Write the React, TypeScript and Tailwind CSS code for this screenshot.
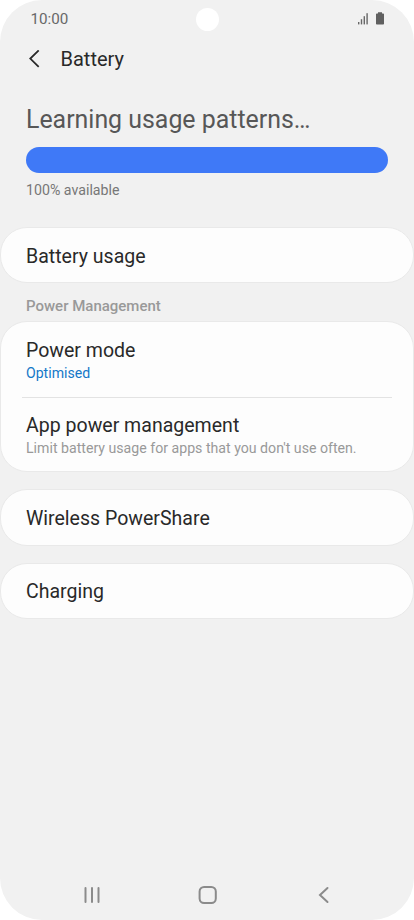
import type { ReactNode } from 'react';

function Card({ children, className }: { children: ReactNode; className: string }) {
  return (
    <section className={`border border-[#e9e9e9] bg-[#fdfdfd] rounded-[27px] ${className}`}>
      {children}
    </section>
  );
}

function RowTitle({ children }: { children: ReactNode }) {
  return <h2 className="text-[19.55px] leading-6 text-[#292929]">{children}</h2>;
}

export default function App() {
  return (
    <div className="w-[414px] h-[920px] bg-white font-['Roboto',sans-serif]">
      <div className="w-full h-full flex flex-col bg-[#f1f1f1] rounded-[42px] overflow-hidden">
        {/* Status bar */}
        <div className="h-[38px] shrink-0 grid grid-cols-3 items-center px-[30px]">
          <span className="pl-[0.4px] text-[15.2px] leading-5 text-[#686868]">10:00</span>
          <div className="w-[23px] h-[23px] rounded-full bg-white justify-self-center" />
          <div className="flex items-center justify-end gap-2 pb-[2px]">
            <svg width="10" height="13" viewBox="0 0 10 13" fill="#686868">
              <rect x="0" y="10" width="1.4" height="2.4" />
              <rect x="2.8" y="7.2" width="1.4" height="5.2" />
              <rect x="5.600" y="4.200" width="1.4" height="8.2" />
              <rect x="8.400" y="1.2" width="1.4" height="11.2" />
            </svg>
            <svg width="8" height="13" viewBox="0 0 8 13" fill="#606060">
              <path d="M2 .3h4v1.2h1.2a.8.8 0 0 1 .8.8v9.5a.8.8 0 0 1-.8.8H.8a.8.8 0 0 1-.8-.8V2.3a.8.8 0 0 1 .8-.8H2z" />
            </svg>
          </div>
        </div>

        {/* Header */}
        <header className="h-[42px] shrink-0 flex items-center pl-[29px]">
          <svg width="11" height="18" viewBox="0 0 11 18" fill="none" stroke="#292929" strokeWidth="1.8">
            <path d="M9.7.4 1.3 8.6l8.4 8.2" />
          </svg>
          <h1 className="ml-[20.5px] text-[20px] leading-6 text-[#292929]">Battery</h1>
        </header>

        {/* Charge level */}
        <div className="h-[147px] shrink-0 px-[26px] pt-[24px]">
          <p className="text-[24.9px] leading-8 text-[#575757]">Learning usage patterns…</p>
          <div className="mt-[11px] h-[26px] rounded-full bg-[#3f79f7]" />
          <p className="mt-[7px] text-[14.2px] leading-5 text-[#777777]">100% available</p>
        </div>

        <Card className="h-[56px] shrink-0 flex items-center px-[25px] pt-[3px]">
          <RowTitle>Battery usage</RowTitle>
        </Card>

        <p className="h-[38px] shrink-0 pt-[13px] px-[26px] text-[15px] leading-5 font-medium text-[#999999]">
          Power Management
        </p>

        <Card className="h-[151px] shrink-0 px-[21px]">
          <div className="h-[75px] px-1 pt-[17px]">
            <RowTitle>Power mode</RowTitle>
            <p className="text-[14.1px] leading-5 text-[#1478c8]">Optimised</p>
          </div>
          <div className="h-[75px] px-1 pt-4 border-t border-[#e3e3e3]">
            <RowTitle>App power management</RowTitle>
            <p className="text-[14.15px] leading-5 text-[#999999]">
              Limit battery usage for apps that you don't use often.
            </p>
          </div>
        </Card>

        <Card className="mt-[17px] h-[57px] shrink-0 flex items-center px-[25px] pt-[2px]">
          <RowTitle>Wireless PowerShare</RowTitle>
        </Card>

        <Card className="mt-[17px] h-[56px] shrink-0 flex items-center px-[25px] pt-[2px]">
          <RowTitle>Charging</RowTitle>
        </Card>

        {/* Navigation bar */}
        <nav className="mt-auto h-[50px] shrink-0 flex items-center justify-between pl-[82px] pr-[80px]">
          <svg width="20" height="20" viewBox="0 0 20 20" stroke="#8b8b8b" strokeWidth="2" strokeLinecap="round">
            <path d="M3.500 3v14M10 3v14M16.500 3v14" />
          </svg>
          <svg width="20" height="20" viewBox="0 0 20 20" fill="none" stroke="#8b8b8b" strokeWidth="2">
            <rect x="1.600" y="2" width="16.200" height="16" rx="4.500" />
          </svg>
          <svg width="20" height="20" viewBox="0 0 20 20" fill="none" stroke="#8b8b8b" strokeWidth="2" strokeLinecap="round">
            <path d="M13.500 3 6 10l7.500 7" />
          </svg>
        </nav>
      </div>
    </div>
  );
}
